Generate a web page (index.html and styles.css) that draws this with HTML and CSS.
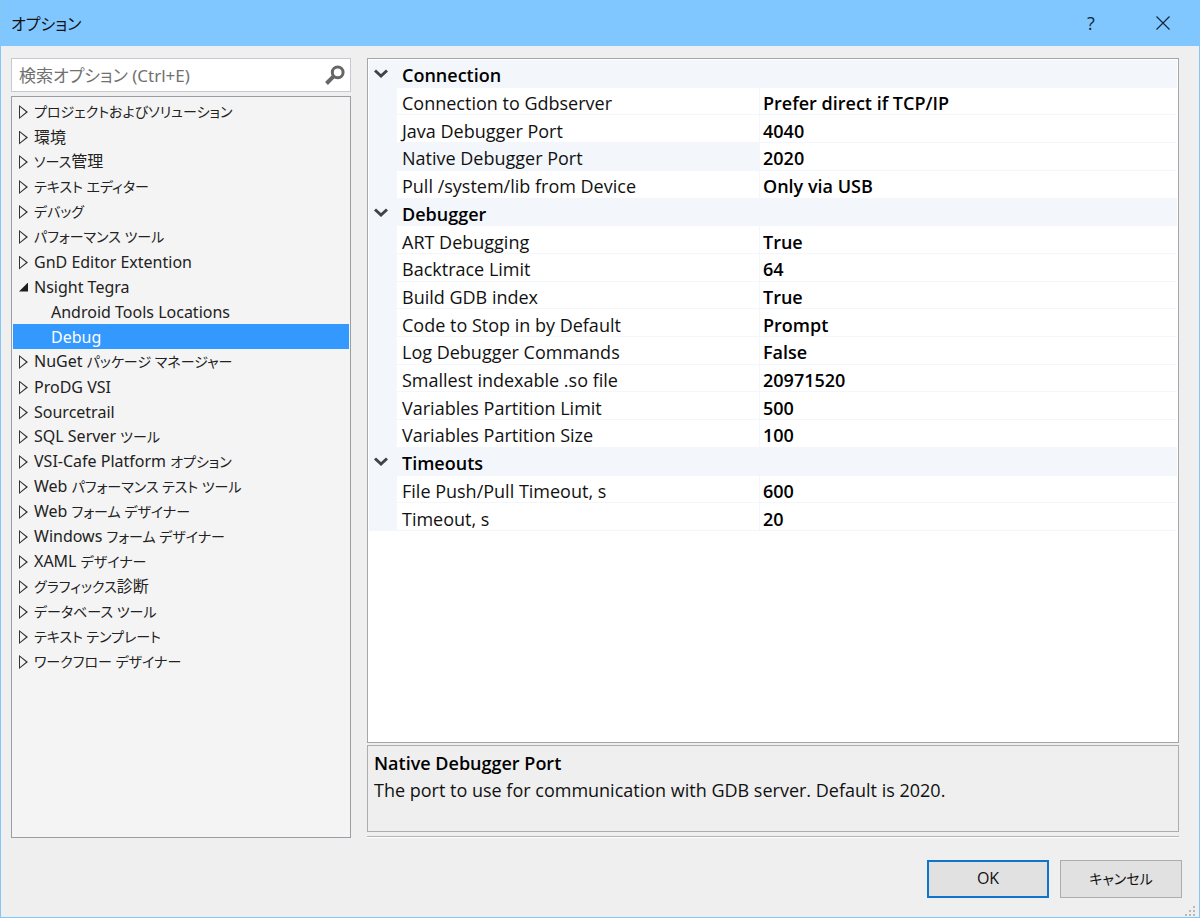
FILE: index.html
```html
<!DOCTYPE html>
<html lang="ja">
<head>
    <meta charset="UTF-8">
    <meta name="viewport" content="width=device-width, initial-scale=1.0">
    <title>オプション</title>
    <link rel="stylesheet" href="styles.css">
</head>
<body>
    <div class="dialog">
        <header class="titlebar">
            <h1>オプション</h1>
            <button type="button" class="title-button" aria-label="ヘルプ">?</button>
            <button type="button" class="title-button" aria-label="閉じる">
                <svg width="14" height="14" viewBox="0 0 14 14"><path d="M0.5 0.5l13 13M13.5 0.5l-13 13" fill="none" stroke="#10283c" stroke-width="1.2"/></svg>
            </button>
        </header>

        <main class="content">
            <div class="sidebar">
                <div class="search">
                    <input type="text" placeholder="検索オプション (Ctrl+E)" aria-label="検索オプション">
                    <svg width="20" height="20" viewBox="0 0 20 20"><circle cx="12.7" cy="7.3" r="5.4" fill="none" stroke="#666" stroke-width="3"/><path d="M8.8 11.2L1.5 18.5" stroke="#666" stroke-width="4"/></svg>
                </div>
                <ul class="tree">
                    <li><button type="button" class="node closed"><span class="kana">プロジェクトおよびソリューション</span></button></li>
                    <li><button type="button" class="node closed">環境</button></li>
                    <li><button type="button" class="node closed"><span class="kana">ソース</span>管理</button></li>
                    <li><button type="button" class="node closed"><span class="kana">テキスト エディター</span></button></li>
                    <li><button type="button" class="node closed"><span class="kana">デバッグ</span></button></li>
                    <li><button type="button" class="node closed"><span class="kana">パフォーマンス ツール</span></button></li>
                    <li><button type="button" class="node closed">GnD Editor Extention</button></li>
                    <li>
                        <button type="button" class="node open" aria-expanded="true">Nsight Tegra</button>
                        <ul>
                            <li><button type="button" class="node leaf">Android Tools Locations</button></li>
                            <li><button type="button" class="node leaf selected">Debug</button></li>
                        </ul>
                    </li>
                    <li><button type="button" class="node closed">NuGet <span class="kana">パッケージ マネージャー</span></button></li>
                    <li><button type="button" class="node closed">ProDG VSI</button></li>
                    <li><button type="button" class="node closed">Sourcetrail</button></li>
                    <li><button type="button" class="node closed">SQL Server <span class="kana">ツール</span></button></li>
                    <li><button type="button" class="node closed">VSI-Cafe Platform <span class="kana">オプション</span></button></li>
                    <li><button type="button" class="node closed">Web <span class="kana">パフォーマンス テスト ツール</span></button></li>
                    <li><button type="button" class="node closed">Web <span class="kana">フォーム デザイナー</span></button></li>
                    <li><button type="button" class="node closed">Windows <span class="kana">フォーム デザイナー</span></button></li>
                    <li><button type="button" class="node closed">XAML <span class="kana">デザイナー</span></button></li>
                    <li><button type="button" class="node closed"><span class="kana">グラフィックス</span>診断</button></li>
                    <li><button type="button" class="node closed"><span class="kana">データベース ツール</span></button></li>
                    <li><button type="button" class="node closed"><span class="kana">テキスト テンプレート</span></button></li>
                    <li><button type="button" class="node closed"><span class="kana">ワークフロー デザイナー</span></button></li>
                </ul>
            </div>

            <div class="settings">
                <div class="grid">
                    <table>
                        <colgroup><col class="col-toggle"><col class="col-name"><col></colgroup>
                        <tbody>
                            <tr class="category"><td><button type="button" class="toggle" aria-label="Connection"><svg width="14" height="10" viewBox="0 0 14 10"><path d="M1 1.5l6 5.5 6-5.5" fill="none" stroke="#404449" stroke-width="3"/></svg></button></td><th colspan="2">Connection</th></tr>
                            <tr><td></td><th>Connection to Gdbserver</th><td>Prefer direct if TCP/IP</td></tr>
                            <tr><td></td><th>Java Debugger Port</th><td>4040</td></tr>
                            <tr class="current"><td></td><th>Native Debugger Port</th><td>2020</td></tr>
                            <tr><td></td><th>Pull /system/lib from Device</th><td>Only via USB</td></tr>
                            <tr class="category"><td><button type="button" class="toggle" aria-label="Debugger"><svg width="14" height="10" viewBox="0 0 14 10"><path d="M1 1.5l6 5.5 6-5.5" fill="none" stroke="#404449" stroke-width="3"/></svg></button></td><th colspan="2">Debugger</th></tr>
                            <tr><td></td><th>ART Debugging</th><td>True</td></tr>
                            <tr><td></td><th>Backtrace Limit</th><td>64</td></tr>
                            <tr><td></td><th>Build GDB index</th><td>True</td></tr>
                            <tr><td></td><th>Code to Stop in by Default</th><td>Prompt</td></tr>
                            <tr><td></td><th>Log Debugger Commands</th><td>False</td></tr>
                            <tr><td></td><th>Smallest indexable .so file</th><td>20971520</td></tr>
                            <tr><td></td><th>Variables Partition Limit</th><td>500</td></tr>
                            <tr><td></td><th>Variables Partition Size</th><td>100</td></tr>
                            <tr class="category"><td><button type="button" class="toggle" aria-label="Timeouts"><svg width="14" height="10" viewBox="0 0 14 10"><path d="M1 1.5l6 5.5 6-5.5" fill="none" stroke="#404449" stroke-width="3"/></svg></button></td><th colspan="2">Timeouts</th></tr>
                            <tr><td></td><th>File Push/Pull Timeout, s</th><td>600</td></tr>
                            <tr><td></td><th>Timeout, s</th><td>20</td></tr>
                        </tbody>
                    </table>
                </div>
                <div class="description">
                    <h2>Native Debugger Port</h2>
                    <p>The port to use for communication with GDB server. Default is 2020.</p>
                </div>
                <hr>
            </div>
        </main>

        <footer class="actions">
            <button type="button" class="button default">OK</button>
            <button type="button" class="button"><span class="kana">キャンセル</span></button>
        </footer>
        <svg class="grip" width="10" height="10" viewBox="0 0 10 10" fill="#b9b9b9"><path d="M8 0h2v2h-2zM4 4h2v2h-2zM8 4h2v2h-2zM0 8h2v2h-2zM4 8h2v2h-2zM8 8h2v2h-2z"/></svg>
    </div>
</body>
</html>
```
FILE: styles.css
```css
* {
    box-sizing: border-box;
}
body {
    margin: 0;
    font-family: "Open Sans", "Noto Sans CJK JP", sans-serif;
    font-size: 18px;
    font-feature-settings: "palt";
    color: #111;
}
button, input {
    font: inherit;
    font-feature-settings: inherit;
    color: inherit;
}
ul {
    list-style: none;
    margin: 0;
    padding: 0;
}
.dialog {
    position: relative;
    display: flex;
    flex-direction: column;
    min-height: 100vh;
    background: #efefef;
    border: 1px solid #84c6f5;
    border-top: 0;
}

/* title bar */
.titlebar {
    display: flex;
    align-items: center;
    height: 46px;
    padding-left: 10px;
    background: #80c6ff;
}
.titlebar h1 {
    flex: 1;
    margin: 0;
    font-size: 16px;
    font-weight: normal;
}
.title-button {
    width: 72px;
    height: 46px;
    padding: 0;
    border: 0;
    background: none;
    color: #10283c;
}
.title-button svg {
    display: block;
    margin: auto;
}

.content {
    flex: 1;
    display: flex;
    gap: 16px;
    padding: 12px 20px 0 10px;
}

/* left side */
.sidebar {
    flex: 0 0 340px;
    display: flex;
    flex-direction: column;
    gap: 4px;
}
.search {
    display: flex;
    align-items: center;
    height: 34px;
    padding: 0 5px 0 7px;
    background: #fff;
    border: 1px solid #c6c8d2;
}
.search input {
    flex: 1;
    min-width: 0;
    padding: 0;
    border: 0;
    outline: 0;
    background: none;
    font-family: "Noto Sans", "Noto Sans CJK JP", sans-serif;
    font-size: 17px;
}
.search input::placeholder {
    color: #717171;
    opacity: 1;
}
.tree {
    flex: 1;
    padding: 2px 1px;
    background: #f4f4f4;
    border: 1px solid #9a9da3;
    font-family: "Noto Sans", "Noto Sans CJK JP", sans-serif;
    font-size: 16px;
    color: #222;
}
.node {
    display: block;
    width: 100%;
    height: 25px;
    padding: 0 0 0 6px;
    border: 0;
    background: none;
    line-height: 24px;
    text-align: left;
    white-space: nowrap;
}
.node::before {
    content: "";
    display: inline-block;
    width: 9px;
    height: 14px;
    margin-right: 6px;
    vertical-align: -2px;
}
.closed::before {
    background: #333;
    clip-path: polygon(evenodd, 0 0, 9px 7px, 0 14px, 0 0, 1px 2px, 1px 12px, 7px 7px, 1px 2px);
}
.open::before {
    height: 9px;
    background: #1e1e1e;
    clip-path: polygon(100% 0, 100% 100%, 0 100%);
    vertical-align: 1px;
}
.leaf {
    padding-left: 38px;
}
.leaf::before {
    display: none;
}
.kana {
    font-size: 14px;
}
.selected {
    background: #3399ff;
    color: #fff;
}

/* property grid */
.settings {
    flex: 1;
    display: flex;
    flex-direction: column;
}
.grid {
    flex: 1;
    padding: 1px;
    background: #fff;
    border: 1px solid #a3a6ab;
}
table {
    width: 100%;
    height: 471px;
    table-layout: fixed;
    border-collapse: separate;
    border-spacing: 0;
    line-height: 22px;
}
.col-toggle {
    width: 28px;
}
.col-name {
    width: 363px;
}
th, td {
    padding: 4px 0 0 5px;
    border-bottom: 1px solid #f3f6fb;
    text-align: left;
    font-weight: normal;
    white-space: nowrap;
}
th {
    border-right: 1px solid #f3f6fb;
}
td:last-child {
    padding-left: 3px;
    color: #000;
    font-weight: 600;
}
tr td:first-child,
.current th,
.category th {
    background: #f3f6fb;
}
.category th {
    color: #000;
    font-weight: 600;
}
td:first-child {
    vertical-align: top;
}
.toggle {
    display: block;
    padding: 5px 0 0;
    border: 0;
    background: none;
}
.toggle svg {
    display: block;
}

/* help text */
.description {
    height: 87px;
    margin-top: 2px;
    padding: 4px 6px;
    border: 1px solid #adadad;
    line-height: 27px;
}
.description h2 {
    margin: 0;
    font-size: 18px;
    font-weight: 600;
    color: #000;
}
.description p {
    margin: 0;
}
hr {
    width: 100%;
    margin: 4px 0 0;
    border: 0;
    border-top: 1px solid #b4b4b4;
    border-bottom: 1px solid #fff;
}

/* buttons */
.actions {
    display: flex;
    justify-content: flex-end;
    gap: 11px;
    padding: 22px 17px 19px;
}
.button {
    width: 122px;
    height: 38px;
    padding: 0 0 2px;
    background: #e1e1e1;
    border: 1px solid #adadad;
    font-size: 16px;
}
.default {
    border: 2px solid #0f75c9;
}
.grip {
    position: absolute;
    right: 4px;
    bottom: 1px;
}
```
